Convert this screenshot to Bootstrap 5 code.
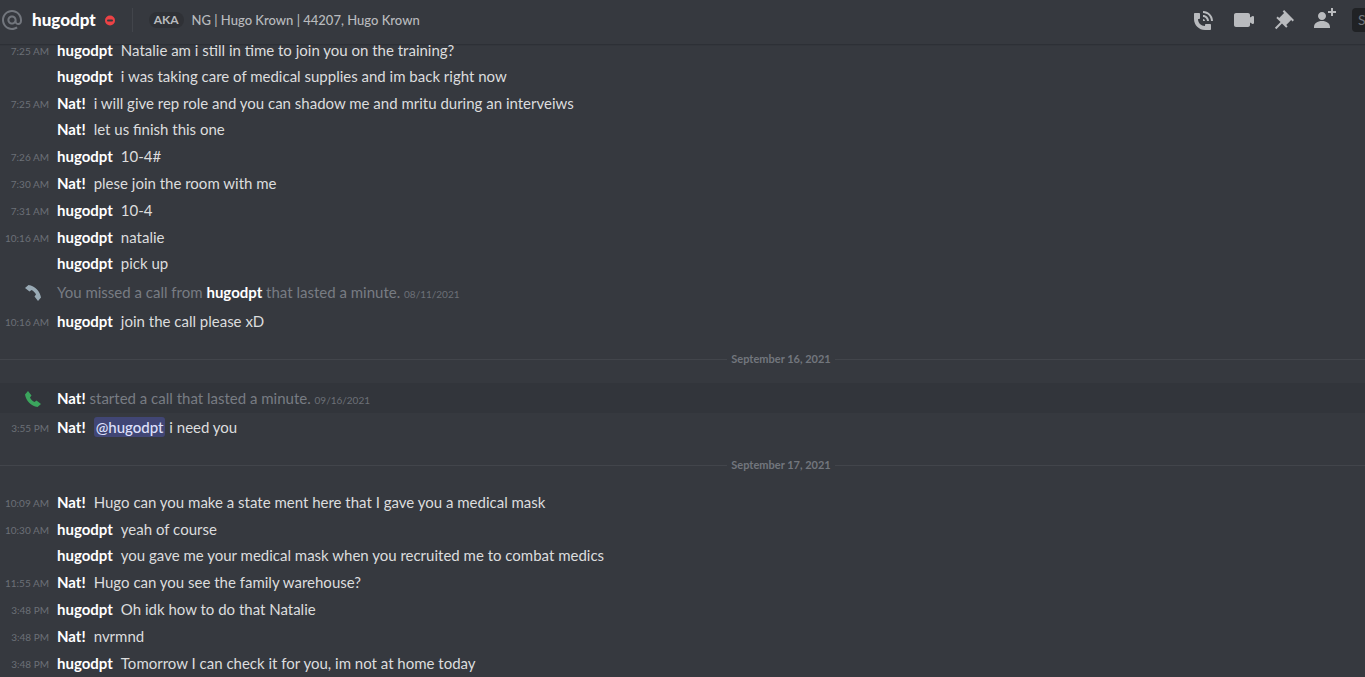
<!DOCTYPE html>
<html lang="en">
<head>
<meta charset="utf-8">
<meta name="viewport" content="width=device-width, initial-scale=1">
<title>hugodpt</title>
<link href="https://cdn.jsdelivr.net/npm/bootstrap@5.3.0/dist/css/bootstrap.min.css" rel="stylesheet">
<style>
  body { background: #36393f; color: #dcddde; font-family: Lato, sans-serif; font-size: 15px; line-height: 26px; }
  .chat-header { height: 45px; padding-bottom: 5px; line-height: 20px; border-bottom: 1px solid #2d3036; box-shadow: 0 1px 0 #33363c; }
  .chat-title { font-size: 17px; font-weight: 900; color: #fff; line-height: 20px; }
  .icon-at { color: #72767d; }
  .rule-v { width: 1px; height: 24px; background: #42454b; }
  .aka { font-size: 12px; line-height: 16px; font-weight: 700; color: #b9bbbe; background: #2f3136; border-radius: 8px; padding: 0 5px; }
  .aka-names { font-size: 13px; font-weight: 500; color: #b9bbbe; }
  .tool { color: #b9bbbe; }
  .search-slot { width: 13px; }
  .search-box { width: 144px; height: 24px; background: #202225; color: #dcddde; border-radius: 4px; padding: 0 6px; font-size: 14px; }
  .search-box::placeholder { color: #72767d; opacity: 1; }
  /* The log is scrolled to its end, so its oldest line touches the header. */
  .chat-log { margin-top: -9px; padding-bottom: 2px; }
  .chat-row { display: grid; grid-template-columns: 49px 1fr; column-gap: 8px; }
  .chat-row.first { margin-top: 1px; }
  .chat-row.call { line-height: 30px; color: #787c83; }
  .chat-row.marked { background: #32353b; }
  .stamp { font-size: 10px; line-height: 24px; color: #6c7077; text-align: right; padding-top: 2px; }
  .call .stamp { line-height: 10px; padding-top: 0; }
  .author { color: #fff; font-weight: 700; text-decoration: none; }
  .author-gap { margin-right: 8px; }
  .mention { color: #dee0fc; background: #414675; border-radius: 3px; padding: 1px 2px; font-weight: 500; text-decoration: none; }
  /* Day rules are centred on the full conversation width, past the window edge. */
  .day { height: 48px; margin-right: -197px; padding-top: 2px; font-size: 11px; font-weight: 700; color: #72767d; }
  .day::before, .day::after { content: ""; flex: 1; height: 1px; background: #42454b; }
  .call-icon { margin-right: 7px; margin-top: 2px; }
</style>
<script src="https://cdn.jsdelivr.net/npm/bootstrap@5.3.0/dist/js/bootstrap.bundle.min.js"></script>
</head>
<body>
<div class="d-flex flex-column vh-100 overflow-hidden">
  <header class="chat-header d-flex align-items-center flex-shrink-0">
    <svg class="icon-at flex-shrink-0" width="24" height="24" viewBox="0 0 24 24" fill="currentColor" aria-hidden="true"><path d="M12 2C6.486 2 2 6.486 2 12C2 17.515 6.486 22 12 22C14.039 22 15.993 21.398 17.652 20.259L16.521 18.611C15.195 19.519 13.633 20 12 20C7.589 20 4 16.411 4 12C4 7.589 7.589 4 12 4C16.411 4 20 7.589 20 12V12.782C20 14.17 19.402 15 18.4 15L18.398 15.018C18.338 15.005 18.273 15 18.209 15H18C17.437 15 16.6 14.182 16.6 13.631V12C16.6 9.464 14.537 7.4 12 7.4C9.463 7.4 7.4 9.463 7.4 12C7.4 14.537 9.463 16.6 12 16.6C13.234 16.6 14.35 16.106 15.177 15.313C15.826 16.269 16.93 17 18 17L18.002 16.981C18.064 16.994 18.129 17 18.195 17H18.4C20.552 17 22 15.306 22 12.782V12C22 6.486 17.514 2 12 2ZM12 14.599C10.566 14.599 9.4 13.433 9.4 11.999C9.4 10.565 10.566 9.399 12 9.399C13.434 9.399 14.6 10.565 14.6 11.999C14.6 13.433 13.434 14.599 12 14.599Z"/></svg>
    <h1 class="chat-title ms-2 mb-0">hugodpt</h1>
    <svg class="ms-2 flex-shrink-0" width="12" height="12" viewBox="0 0 12 12" role="img" aria-label="Do not disturb"><circle cx="6" cy="6.500" r="5" fill="#ed4245"/><rect x="3" y="5.500" width="6" height="2" rx="1" fill="#36393f"/></svg>
    <span class="rule-v ms-3 me-3"></span>
    <span class="aka">AKA</span>
    <span class="aka-names ms-2 text-nowrap">NG | Hugo Krown | 44207, Hugo Krown</span>
    <div class="d-flex align-items-center gap-3 ms-auto">
      <button type="button" class="tool btn p-0 border-0 d-flex" aria-label="Start voice call"><svg width="24" height="24" viewBox="0 0 24 24" fill="currentColor"><path d="M11 5V3C16.515 3 21 7.486 21 13H19C19 8.589 15.411 5 11 5ZM17 13H15C15 10.795 13.206 9 11 9V7C14.309 7 17 9.691 17 13ZM11 11V13H13C13 11.896 12.105 11 11 11ZM14 16H18C18.553 16 19 16.448 19 17V21C19 21.553 18.553 22 18 22H13C6.925 22 2 17.075 2 11V6C2 5.448 2.448 5 3 5H7C7.553 5 8 5.448 8 6V10C8 10.553 7.553 11 7 11H6C6.063 14.938 9 18 13 18V17C13 16.448 13.447 16 14 16Z"/></svg></button>
      <button type="button" class="tool btn p-0 border-0 d-flex" aria-label="Start video call"><svg width="24" height="24" viewBox="0 0 24 24" fill="currentColor"><path d="M21.526 8.149C21.231 7.966 20.862 7.951 20.553 8.105L18 9.382V7C18 5.897 17.103 5 16 5H4C2.897 5 2 5.897 2 7V17C2 18.104 2.897 19 4 19H16C17.103 19 18 18.104 18 17V14.618L20.553 15.894C20.694 15.965 20.847 16 21 16C21.183 16 21.365 15.949 21.526 15.851C21.82 15.668 22 15.347 22 15V9C22 8.653 21.82 8.332 21.526 8.149Z"/></svg></button>
      <button type="button" class="tool btn p-0 border-0 d-flex" aria-label="Pinned messages"><svg width="24" height="24" viewBox="0 0 24 24" fill="currentColor"><path d="M22 12L12.101 2.101L10.686 3.514L12.101 4.929L7.151 9.878V9.88L5.736 8.465L4.322 9.88L8.565 14.122L2.908 19.778L4.322 21.192L9.979 15.536L14.222 19.778L15.636 18.364L14.222 16.95L19.171 12H19.172L20.586 13.414L22 12Z"/></svg></button>
      <button type="button" class="tool btn p-0 border-0 d-flex" aria-label="Add friends to DM"><svg width="24" height="24" viewBox="0 0 24 24" fill="currentColor"><path d="M21 3H24V5H21V8H19V5H16V3H19V0H21V3ZM10 12C12.205 12 14 10.205 14 8C14 5.795 12.205 4 10 4C7.795 4 6 5.795 6 8C6 10.205 7.795 12 10 12ZM10 13C5.289 13 2 15.467 2 19V20H18V19C18 15.467 14.711 13 10 13Z"/></svg></button>
      <div class="search-slot d-flex overflow-hidden"><input type="search" class="search-box border-0 flex-shrink-0" placeholder="Search" aria-label="Search"></div>
    </div>
  </header>

  <main class="chat-log flex-grow-1 d-flex flex-column justify-content-end">
    <div class="chat-row first"><time class="stamp">7:25 AM</time><div><a href="#" class="author author-gap">hugodpt</a>Natalie am i still in time to join you on the training?</div></div>
    <div class="chat-row"><span></span><div><a href="#" class="author author-gap">hugodpt</a>i was taking care of medical supplies and im back right now</div></div>
    <div class="chat-row first"><time class="stamp">7:25 AM</time><div><a href="#" class="author author-gap">Nat!</a>i will give rep role and you can shadow me and mritu during an interveiws</div></div>
    <div class="chat-row"><span></span><div><a href="#" class="author author-gap">Nat!</a>let us finish this one</div></div>
    <div class="chat-row first"><time class="stamp">7:26 AM</time><div><a href="#" class="author author-gap">hugodpt</a>10-4#</div></div>
    <div class="chat-row first"><time class="stamp">7:30 AM</time><div><a href="#" class="author author-gap">Nat!</a>plese join the room with me</div></div>
    <div class="chat-row first"><time class="stamp">7:31 AM</time><div><a href="#" class="author author-gap">hugodpt</a>10-4</div></div>
    <div class="chat-row first"><time class="stamp">10:16 AM</time><div><a href="#" class="author author-gap">hugodpt</a>natalie</div></div>
    <div class="chat-row"><span></span><div><a href="#" class="author author-gap">hugodpt</a>pick up</div></div>
    <div class="chat-row first call"><svg class="call-icon align-self-center ms-auto" width="18" height="18" viewBox="0 0 18 18" fill="#99aab5" aria-hidden="true"><path transform="rotate(180 9 9)" d="M1 4.500L4 1L7.500 5.500L6 7.500C7 9.500 8.500 11 10.500 12L12.500 10.500L17 14L13.500 17C7 16 2 11 1 4.500Z"/></svg><div>You missed a call from <a href="#" class="author">hugodpt</a> that lasted a minute. <time class="stamp">08/11/2021</time></div></div>
    <div class="chat-row first"><time class="stamp">10:16 AM</time><div><a href="#" class="author author-gap">hugodpt</a>join the call please xD</div></div>

    <div class="day d-flex align-items-center gap-1"><time>September 16, 2021</time></div>

    <div class="chat-row first call marked"><svg class="call-icon align-self-center ms-auto" width="18" height="18" viewBox="0 0 18 18" fill="#3ba55d" aria-hidden="true"><path d="M1 4.500L4 1L7.500 5.500L6 7.500C7 9.500 8.500 11 10.500 12L12.500 10.500L17 14L13.500 17C7 16 2 11 1 4.500Z"/></svg><div><a href="#" class="author">Nat!</a> started a call that lasted a minute. <time class="stamp">09/16/2021</time></div></div>
    <div class="chat-row first"><time class="stamp">3:55 PM</time><div><a href="#" class="author author-gap">Nat!</a><a href="#" class="mention">@hugodpt</a> i need you</div></div>

    <div class="day d-flex align-items-center gap-1"><time>September 17, 2021</time></div>

    <div class="chat-row first"><time class="stamp">10:09 AM</time><div><a href="#" class="author author-gap">Nat!</a>Hugo can you make a state ment here that I gave you a medical mask</div></div>
    <div class="chat-row first"><time class="stamp">10:30 AM</time><div><a href="#" class="author author-gap">hugodpt</a>yeah of course</div></div>
    <div class="chat-row"><span></span><div><a href="#" class="author author-gap">hugodpt</a>you gave me your medical mask when you recruited me to combat medics</div></div>
    <div class="chat-row first"><time class="stamp">11:55 AM</time><div><a href="#" class="author author-gap">Nat!</a>Hugo can you see the family warehouse?</div></div>
    <div class="chat-row first"><time class="stamp">3:48 PM</time><div><a href="#" class="author author-gap">hugodpt</a>Oh idk how to do that Natalie</div></div>
    <div class="chat-row first"><time class="stamp">3:48 PM</time><div><a href="#" class="author author-gap">Nat!</a>nvrmnd</div></div>
    <div class="chat-row first"><time class="stamp">3:48 PM</time><div><a href="#" class="author author-gap">hugodpt</a>Tomorrow I can check it for you, im not at home today</div></div>
  </main>
</div>
</body>
</html>
